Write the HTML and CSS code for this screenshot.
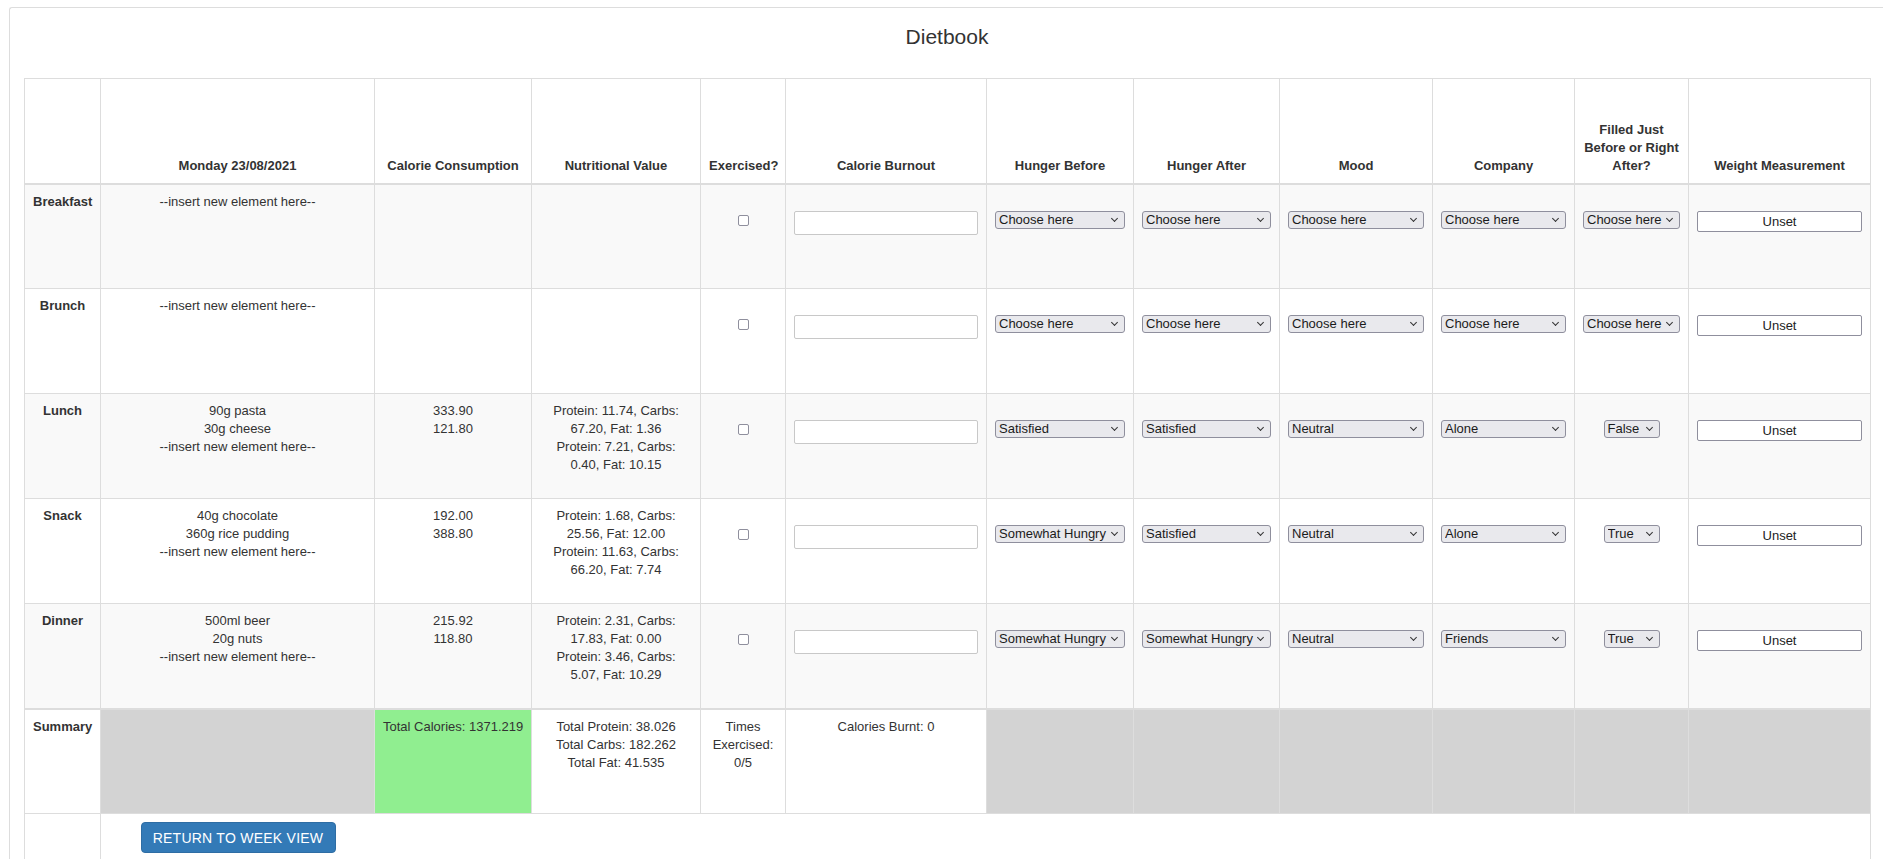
FILE: index.html
```html
<!DOCTYPE html>
<html>
<head>
<meta charset="utf-8">
<title>Dietbook</title>
<link rel="stylesheet" href="styles.css">
</head>
<body>
<div class="panel">
  <h1 class="title">Dietbook</h1>
  <table class="diet">
    <colgroup>
      <col class="w1"><col class="w2"><col class="w3"><col class="w4"><col class="w5"><col class="w6">
      <col class="w7"><col class="w8"><col class="w9"><col class="w10"><col class="w11"><col class="w12">
    </colgroup>
    <thead>
      <tr>
        <th></th>
        <th>Monday 23/08/2021</th>
        <th>Calorie Consumption</th>
        <th>Nutritional Value</th>
        <th>Exercised?</th>
        <th>Calorie Burnout</th>
        <th>Hunger Before</th>
        <th>Hunger After</th>
        <th>Mood</th>
        <th>Company</th>
        <th>Filled Just Before or Right After?</th>
        <th>Weight Measurement</th>
      </tr>
    </thead>
    <tbody class="meals">
      <tr>
        <th class="meal">Breakfast</th>
        <td><div>--insert new element here--</div></td>
        <td></td>
        <td class="nutri"></td>
        <td><div class="ctl"><input type="checkbox" class="check"></div></td>
        <td><div class="ctl"><input type="text" class="num"></div></td>
        <td><div class="ctl"><span class="sel"><select><option>Choose here</option></select></span></div></td>
        <td><div class="ctl"><span class="sel"><select><option>Choose here</option></select></span></div></td>
        <td><div class="ctl"><span class="sel"><select><option>Choose here</option></select></span></div></td>
        <td><div class="ctl"><span class="sel"><select><option>Choose here</option></select></span></div></td>
        <td><div class="ctl"><span class="sel"><select><option>Choose here</option></select></span></div></td>
        <td><div class="ctl"><button class="unset">Unset</button></div></td>
      </tr>
      <tr>
        <th class="meal">Brunch</th>
        <td><div>--insert new element here--</div></td>
        <td></td>
        <td class="nutri"></td>
        <td><div class="ctl"><input type="checkbox" class="check"></div></td>
        <td><div class="ctl"><input type="text" class="num"></div></td>
        <td><div class="ctl"><span class="sel"><select><option>Choose here</option></select></span></div></td>
        <td><div class="ctl"><span class="sel"><select><option>Choose here</option></select></span></div></td>
        <td><div class="ctl"><span class="sel"><select><option>Choose here</option></select></span></div></td>
        <td><div class="ctl"><span class="sel"><select><option>Choose here</option></select></span></div></td>
        <td><div class="ctl"><span class="sel"><select><option>Choose here</option></select></span></div></td>
        <td><div class="ctl"><button class="unset">Unset</button></div></td>
      </tr>
      <tr>
        <th class="meal">Lunch</th>
        <td><div>90g pasta</div><div>30g cheese</div><div>--insert new element here--</div></td>
        <td><div>333.90</div><div>121.80</div></td>
        <td class="nutri"><div>Protein: 11.74, Carbs: 67.20, Fat: 1.36</div><div>Protein: 7.21, Carbs: 0.40, Fat: 10.15</div></td>
        <td><div class="ctl"><input type="checkbox" class="check"></div></td>
        <td><div class="ctl"><input type="text" class="num"></div></td>
        <td><div class="ctl"><span class="sel"><select><option>Satisfied</option></select></span></div></td>
        <td><div class="ctl"><span class="sel"><select><option>Satisfied</option></select></span></div></td>
        <td><div class="ctl"><span class="sel"><select><option>Neutral</option></select></span></div></td>
        <td><div class="ctl"><span class="sel"><select><option>Alone</option></select></span></div></td>
        <td><div class="ctl"><span class="sel bool"><select><option>False</option></select></span></div></td>
        <td><div class="ctl"><button class="unset">Unset</button></div></td>
      </tr>
      <tr>
        <th class="meal">Snack</th>
        <td><div>40g chocolate</div><div>360g rice pudding</div><div>--insert new element here--</div></td>
        <td><div>192.00</div><div>388.80</div></td>
        <td class="nutri"><div>Protein: 1.68, Carbs: 25.56, Fat: 12.00</div><div>Protein: 11.63, Carbs: 66.20, Fat: 7.74</div></td>
        <td><div class="ctl"><input type="checkbox" class="check"></div></td>
        <td><div class="ctl"><input type="text" class="num"></div></td>
        <td><div class="ctl"><span class="sel"><select><option>Somewhat Hungry</option></select></span></div></td>
        <td><div class="ctl"><span class="sel"><select><option>Satisfied</option></select></span></div></td>
        <td><div class="ctl"><span class="sel"><select><option>Neutral</option></select></span></div></td>
        <td><div class="ctl"><span class="sel"><select><option>Alone</option></select></span></div></td>
        <td><div class="ctl"><span class="sel bool"><select><option>True</option></select></span></div></td>
        <td><div class="ctl"><button class="unset">Unset</button></div></td>
      </tr>
      <tr>
        <th class="meal">Dinner</th>
        <td><div>500ml beer</div><div>20g nuts</div><div>--insert new element here--</div></td>
        <td><div>215.92</div><div>118.80</div></td>
        <td class="nutri"><div>Protein: 2.31, Carbs: 17.83, Fat: 0.00</div><div>Protein: 3.46, Carbs: 5.07, Fat: 10.29</div></td>
        <td><div class="ctl"><input type="checkbox" class="check"></div></td>
        <td><div class="ctl"><input type="text" class="num"></div></td>
        <td><div class="ctl"><span class="sel"><select><option>Somewhat Hungry</option></select></span></div></td>
        <td><div class="ctl"><span class="sel"><select><option>Somewhat Hungry</option></select></span></div></td>
        <td><div class="ctl"><span class="sel"><select><option>Neutral</option></select></span></div></td>
        <td><div class="ctl"><span class="sel"><select><option>Friends</option></select></span></div></td>
        <td><div class="ctl"><span class="sel bool"><select><option>True</option></select></span></div></td>
        <td><div class="ctl"><button class="unset">Unset</button></div></td>
      </tr>
    </tbody>
    <tbody class="summary">
      <tr>
        <th class="meal">Summary</th>
        <td class="gray"></td>
        <td class="green nowrap">Total Calories: 1371.219</td>
        <td><div>Total Protein: 38.026</div><div>Total Carbs: 182.262</div><div>Total Fat: 41.535</div></td>
        <td>Times Exercised: 0/5</td>
        <td>Calories Burnt: 0</td>
        <td class="gray"></td>
        <td class="gray"></td>
        <td class="gray"></td>
        <td class="gray"></td>
        <td class="gray"></td>
        <td class="gray"></td>
      </tr>
    </tbody>
    <tbody class="actions">
      <tr>
        <td></td>
        <td colspan="11" class="action-cell"><div class="btn-slot"><button class="btn-primary">Return to week view</button></div></td>
      </tr>
    </tbody>
  </table>
</div>
</body>
</html>
```

FILE: styles.css
```css
* { box-sizing: border-box; }

html, body { margin: 0; }

body {
  font-family: "Liberation Sans", Arial, sans-serif;
  font-size: 13px;
  line-height: 18px;
  color: #333;
  background: #fff;
  padding: 7px 0 0 9px;
  overflow: hidden;
}

.panel {
  border: 1px solid #ddd;
  border-right: 0;
  border-radius: 3px 0 0 0;
  padding: 17px 0 40px 14px;
}

.title {
  width: 1846px;
  margin: 0 0 29px;
  font-size: 21px;
  line-height: 24px;
  font-weight: normal;
  text-align: center;
  color: #333;
}

.diet {
  width: 1846px;
  table-layout: fixed;
  border-collapse: collapse;
  border: 1px solid #ddd;
}

.w1 { width: 76px; }
.w2 { width: 274px; }
.w3 { width: 157px; }
.w4 { width: 169px; }
.w5 { width: 85px; }
.w6 { width: 201px; }
.w7 { width: 147px; }
.w8 { width: 146px; }
.w9 { width: 153px; }
.w10 { width: 142px; }
.w11 { width: 114px; }
.w12 { width: 182px; }

.diet th,
.diet td {
  border: 1px solid #ddd;
  padding: 8px;
  text-align: center;
  vertical-align: top;
}

.diet td.nutri {
  padding-left: 11px;
  padding-right: 11px;
}

.diet thead th {
  vertical-align: bottom;
  border-bottom-width: 2px;
  font-weight: bold;
}

.diet thead tr { height: 105px; }

.meals tr { height: 105px; }
.meals tr:nth-child(odd) { background: #f9f9f9; }

.summary { border-top: 2px solid #ddd; }
.summary tr { height: 105px; }

.meal { font-weight: bold; }

.gray { background: #d3d3d3; }
.green { background: #90ee90; }
.nowrap { white-space: nowrap; }

.ctl {
  padding-top: 18px;
  display: flex;
  justify-content: center;
}

.sel {
  position: relative;
  display: block;
  width: 100%;
}

.sel.bool { width: 56px; }

.sel select {
  -webkit-appearance: none;
  appearance: none;
  display: block;
  width: 100%;
  height: 18px;
  margin: 0;
  padding: 0 12px 0 3px;
  border: 1px solid #8f8f9d;
  border-radius: 3px;
  background: #e9e9ed;
  font-family: "Liberation Sans", Arial, sans-serif;
  font-size: 13px;
  line-height: 16px;
  color: #1b1b1b;
}

.sel::after {
  content: "";
  position: absolute;
  right: 8px;
  top: 5px;
  width: 4px;
  height: 4px;
  border-right: 1px solid #333;
  border-bottom: 1px solid #333;
  transform: rotate(45deg);
  pointer-events: none;
}

.check {
  -webkit-appearance: none;
  appearance: none;
  display: block;
  width: 11px;
  height: 11px;
  margin: 4px 0 0;
  border: 1px solid #8f8f9d;
  border-radius: 2px;
  background: #fff;
}

.num {
  display: block;
  width: 100%;
  height: 24px;
  margin: 0;
  padding: 0 4px;
  border: 1px solid #c8c8c8;
  border-radius: 2px;
  background: #fff;
}

.unset {
  display: block;
  width: 100%;
  height: 21px;
  margin: 0;
  padding: 0;
  border: 1px solid #8f8f9d;
  border-radius: 2px;
  background: #fff;
  font-family: "Liberation Sans", Arial, sans-serif;
  font-size: 13px;
  color: #222;
}

.actions td { border-bottom: 0; }

.action-cell {
  border-left: 1px solid #ddd;
}

.btn-slot {
  width: 258px;
  display: flex;
  justify-content: center;
}

.btn-primary {
  width: 195px;
  height: 31px;
  margin: 0;
  padding: 0;
  border: 1px solid #2e6da4;
  border-radius: 4px;
  background: #337ab7;
  color: #fff;
  font-family: "Liberation Sans", Arial, sans-serif;
  font-size: 14px;
  letter-spacing: 0.25px;
  text-transform: uppercase;
}
```
